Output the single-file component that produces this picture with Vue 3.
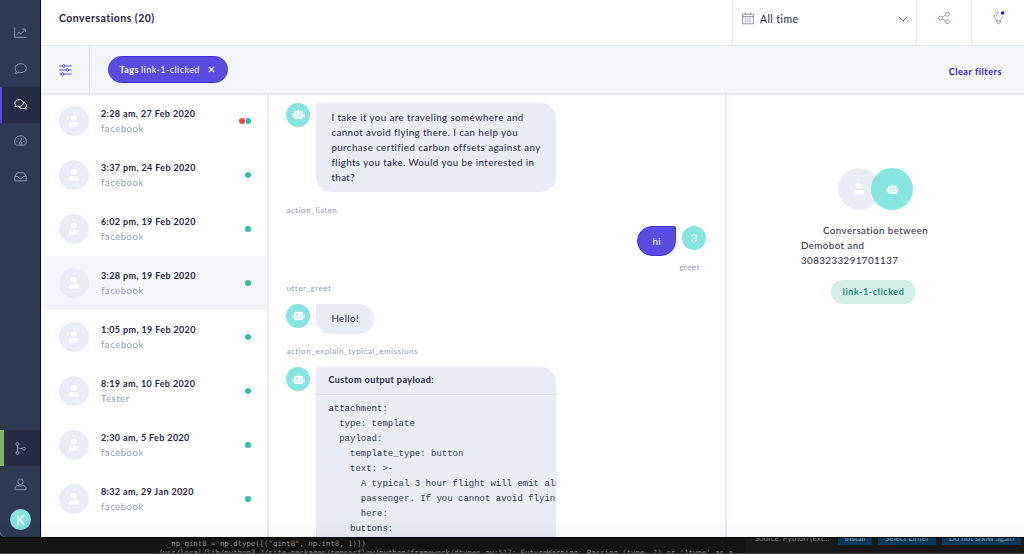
<template>
    <div class="screen">
        <div class="window">
            <nav class="sidebar">
                <div class="nav-top">
                    <div v-for="item in topNav" :key="item.name" class="nav-item" :class="{ active: item.name === 'conversations' }">
                        <svg viewBox="0 0 14 14" class="nav-icon"><path v-for="d in item.paths" :key="d" :d="d" /></svg>
                    </div>
                </div>
                <div class="nav-bottom">
                    <div v-for="item in bottomNav" :key="item.name" class="nav-item" :class="{ branch: item.name === 'branch' }">
                        <svg viewBox="0 0 14 14" class="nav-icon"><path v-for="d in item.paths" :key="d" :d="d" /></svg>
                    </div>
                    <div class="account">K</div>
                </div>
            </nav>

            <main class="main">
                <header class="header">
                    <h1>Conversations (20)</h1>
                    <div class="date-picker">
                        <svg viewBox="0 0 12 13" class="calendar">
                            <path d="M.6 2.2h10.8v9.6H.6zM.6 4.6h10.8M3.2.4v2.2M8.8.4v2.2" />
                            <path class="dots" d="M3 6.8h6.4M3 9.1h6.4" />
                        </svg>
                        <span>All time</span>
                        <svg viewBox="0 0 10 6" class="chevron"><path d="M.9.9 5 4.9 9.1.9" /></svg>
                    </div>
                    <button class="header-btn share">
                        <svg viewBox="0 0 12 12"><circle cx="2.5" cy="6" r="1.9" /><circle cx="9.3" cy="2.3" r="1.9" /><circle cx="9.3" cy="9.7" r="1.9" /><path d="M4.2 5.1 7.6 3.2M4.2 6.9 7.6 8.8" /></svg>
                    </button>
                    <button class="header-btn bulb">
                        <svg viewBox="0 0 12 14">
                            <path d="M6 1.6C3.4 1.3 1.5 3 1.5 5.2c0 2 1.7 2.6 2.3 4.8h3.4C7.7 8 9.4 7.3 9.6 5.4M3.9 10v1.6l1 1.2h1.2l1-1.2V10M3.4 5.3c0-1.1.8-1.8 1.9-1.9" />
                            <circle class="alert" cx="9.7" cy="2" r="1.8" />
                        </svg>
                    </button>
                </header>

                <div class="filters">
                    <div class="filter-toggle">
                        <svg viewBox="0 0 13 12"><path d="M.3 2h3.1M6.2 2h6.5M.3 6h6.8M9.9 6h2.8M.3 10h1.8M4.9 10h7.8" /><circle cx="4.8" cy="2" r="1.3" /><circle cx="8.5" cy="6" r="1.3" /><circle cx="3.5" cy="10" r="1.3" /></svg>
                    </div>
                    <div class="tag-filter">
                        <b>Tags</b><span>link-1-clicked</span>
                        <svg viewBox="0 0 7 7"><path d="M.8.8l5.4 5.4M6.2.8L.8 6.2" /></svg>
                    </div>
                    <a class="clear">Clear filters</a>
                </div>

                <div class="columns">
                    <div class="list">
                        <div v-for="(c, i) in conversations" :key="c.date" class="row" :class="{ selected: i === selected }" @click="selected = i">
                            <div class="avatar user">
                                <svg viewBox="0 0 12 14"><circle cx="6" cy="3.8" r="2.9" /><path d="M.8 12.6v-1.5C.8 9 2.3 7.9 4 7.7c1.2.7 2.8.7 4 0 1.7.2 3.2 1.3 3.2 3.4v1.5z" /></svg>
                            </div>
                            <div class="row-text">
                                <strong>{{ c.date }}</strong>
                                <span>{{ c.channel }}</span>
                            </div>
                            <div class="status">
                                <i v-if="c.error" class="dot red"></i>
                                <i class="dot green"></i>
                            </div>
                        </div>
                    </div>

                    <div class="chat">
                        <template v-for="(m, i) in messages" :key="i">
                            <div class="message" :class="m.from">
                                <div v-if="m.from === 'bot'" class="avatar bot">
                                    <svg viewBox="0 0 14 12"><path :d="robot" /></svg>
                                </div>
                                <div class="bubble">{{ m.text }}</div>
                                <div v-if="m.from === 'me'" class="avatar bot">3</div>
                            </div>
                            <div class="label" :class="m.from">{{ m.label }}</div>
                            <div v-if="m.next" class="label next">{{ m.next }}</div>
                        </template>
                        <div class="message bot">
                            <div class="avatar bot">
                                <svg viewBox="0 0 14 12"><path :d="robot" /></svg>
                            </div>
                            <div class="payload">
                                <div class="payload-title">Custom output payload:</div>
                                <pre>{{ payload }}</pre>
                            </div>
                        </div>
                    </div>

                    <aside class="details">
                        <div class="pair">
                            <div class="avatar user">
                                <svg viewBox="0 0 12 14"><circle cx="6" cy="3.8" r="2.9" /><path d="M.8 12.6v-1.5C.8 9 2.3 7.9 4 7.7c1.2.7 2.8.7 4 0 1.7.2 3.2 1.3 3.2 3.4v1.5z" /></svg>
                            </div>
                            <div class="avatar bot">
                                <svg viewBox="0 0 14 12"><path :d="robot" /></svg>
                            </div>
                        </div>
                        <p>Conversation between<br>Demobot and<br>3083233291701137</p>
                        <div class="tag">link-1-clicked</div>
                    </aside>
                </div>
            </main>
        </div>

        <div class="terminal">
            <pre class="output">{{ output }}</pre>
            <div class="toast">
                <span class="source">Source: Python (Ext...</span>
                <span class="action install">Install</span>
                <span class="action linter">Select Linter</span>
                <span class="action again">Do not show again</span>
            </div>
        </div>
    </div>
</template>

<script setup>
import { ref } from 'vue';

const selected = ref(3);

const topNav = [
    { name: 'chart', paths: ['M.7 1.8v10.4h12.8', 'M3.3 9.4 5.2 6.8l2.1 2 4.2-4.5', 'M8.8 3.3h3.4v3.4'] },
    { name: 'chat', paths: ['M7.2 1.8C3.8 1.8 1.2 3.9 1.2 6.7c0 1.3.5 2.3 1.3 3.2-.2 1-.8 1.7-1.5 2.3 1.4 0 2.6-.4 3.5-1.1.8.3 1.7.4 2.7.4 3.4 0 6.1-2.1 6.1-4.8S10.6 1.8 7.2 1.8z'] },
    { name: 'conversations', paths: ['M5.5 1.8C2.9 1.8.9 3.3.9 5.4c0 .9.4 1.7.9 2.3-.1.7-.5 1.2-1 1.7 1.1 0 1.9-.3 2.6-.8.7.3 1.4.4 2.1.4 2.6 0 4.6-1.6 4.6-3.6S8.1 1.8 5.5 1.8z', 'M10.3 4.9c1.9.4 3.1 1.7 3.1 3.2 0 .8-.3 1.5-.9 2.1.1.7.5 1.2 1 1.7-1 0-1.9-.3-2.6-.8-2.2.7-4.8 0-5.6-1.9'] },
    { name: 'gauge', paths: ['M2.5 12C1.3 10.9.7 9.5.7 8 .7 4.6 3.5 1.9 7 1.9s6.3 2.7 6.3 6.1c0 1.5-.6 2.9-1.8 4z', 'M8.1 4.1 7.2 8.5M5.8 9.7a1.3 1.3 0 1 0 2.6 0 1.3 1.3 0 1 0-2.6 0', 'M2.7 8h1.2M10.2 8h1.2M3.9 5h1.1M9.8 5.3h.8'] },
    { name: 'inbox', paths: ['M.8 7 3.3 3h7.4l2.5 4v4.7H.8z', 'M.8 7h3.5l1.2 1.9h3L9.7 7h3.5'] },
];

const bottomNav = [
    { name: 'branch', paths: ['M2.1 2.2a1.6 1.6 0 1 0 3.2 0 1.6 1.6 0 1 0-3.2 0', 'M2.1 11.8a1.6 1.6 0 1 0 3.2 0 1.6 1.6 0 1 0-3.2 0', 'M9 7.2a1.6 1.6 0 1 0 3.2 0 1.6 1.6 0 1 0-3.2 0', 'M3.7 3.8v6.4M3.7 4.7c.3 1.7 2 2.5 5.3 2.5'] },
    { name: 'profile', paths: ['M4.1 4a2.9 2.9 0 1 0 5.8 0 2.9 2.9 0 1 0-5.8 0', 'M4.5 8.2C2.6 8.2 1.2 9.4 1.2 11v1.6h11.6V11c0-1.6-1.4-2.8-3.3-2.8-1.5.6-3.5.6-5 0z'] },
];

const robot = 'M6.5 0h1v2h2.7c.9 0 1.5.6 1.5 1.5v6c0 .9-.6 1.5-1.5 1.5H3.8c-.9 0-1.5-.6-1.5-1.5v-6C2.3 2.6 2.9 2 3.8 2h2.7zM.7 5h1v4h-1C.3 9 0 8.7 0 8.3V5.7C0 5.3.3 5 .7 5zM12.3 5h1c.4 0 .7.3.7.7v2.6c0 .4-.3.7-.7.7h-1zM4.2 4.7v1.6h1.6V4.7zM8.2 4.7v1.6h1.6V4.7zM4 8v.9h1.4V8zM6.3 8v.9h1.4V8zM8.6 8v.9H10V8z';

const conversations = [
    { date: '2:28 am, 27 Feb 2020', channel: 'facebook', error: true },
    { date: '3:37 pm, 24 Feb 2020', channel: 'facebook' },
    { date: '6:02 pm, 19 Feb 2020', channel: 'facebook' },
    { date: '3:28 pm, 19 Feb 2020', channel: 'facebook' },
    { date: '1:05 pm, 19 Feb 2020', channel: 'facebook' },
    { date: '8:19 am, 10 Feb 2020', channel: 'Tester' },
    { date: '2:30 am, 5 Feb 2020', channel: 'facebook' },
    { date: '8:32 am, 29 Jan 2020', channel: 'facebook' },
];

const messages = [
    {
        from: 'bot',
        text: 'I take it you are traveling somewhere and\ncannot avoid flying there. I can help you\npurchase certified carbon offsets against any\nflights you take. Would you be interested in\nthat?',
        label: 'action_listen',
    },
    { from: 'me', text: 'hi', label: 'greet', next: 'utter_greet' },
    { from: 'bot', text: 'Hello!', label: 'action_explain_typical_emissions' },
];

const payload = `attachment:
  type: template
  payload:
    template_type: button
    text: >-
      A typical 3 hour flight will emit almost
      passenger. If you cannot avoid flying,
      here:
    buttons:`;

const output = `  _np_qint8 = np.dtype([("qint8", np.int8, 1)])
/usr/local/lib/python3.7/site-packages/tensorflow/python/framework/dtypes.py:517: FutureWarning: Passing (type, 1) or '1type' as a`;
</script>

<style>
body {
    background: #111;
}
</style>

<style scoped>
.screen {
    width: 1024px;
    height: 554px;
    overflow: hidden;
    background: #111;
    font-family: Lato, "Liberation Sans", sans-serif;
    color: #1f2440;
}

svg {
    fill: none;
    stroke: currentColor;
    display: block;
}

.window {
    position: relative;
    display: flex;
    height: 537px;
    border-bottom-left-radius: 5px;
    overflow: hidden;
    background: #fff;

    /* shade along the lower edge */
    &::after {
        content: '';
        position: absolute;
        inset: auto 0 0 0;
        height: 20px;
        background: linear-gradient(transparent, rgba(0, 0, 0, .04));
    }
}

.sidebar {
    box-sizing: border-box;
    width: 41px;
    flex: none;
    display: flex;
    flex-direction: column;
    justify-content: space-between;
    padding-top: 15px;
    background: #2e3a54;
    border-right: 1px solid #080b2d;
}

.nav-item {
    box-sizing: border-box;
    height: 36px;
    display: flex;
    align-items: center;
    justify-content: center;
    color: #969fb8;
}

.nav-item.active {
    background: #232c42;
    color: #fff;
    border-left: 2px solid #5a4be3;
    padding-right: 2px;
}

.nav-item.branch {
    background: #232c42;
    border-left: 4px solid #84b262;
    padding-right: 4px;
}

.nav-icon {
    width: 13px;
    height: 13px;
    stroke-width: 1;
}

.nav-top .nav-icon {
    margin-bottom: 1px;
}

.account {
    width: 21px;
    height: 21px;
    margin: 7px auto 7px 10px;
    border-radius: 50%;
    background: #85e5e0;
    color: #fff;
    font-size: 13px;
    line-height: 22px;
    text-align: center;
}

.main {
    flex: 1;
    min-width: 0;
    display: flex;
    flex-direction: column;
}

.header {
    height: 45px;
    display: flex;
    border-bottom: 1px solid #e4e6f0;
}

h1 {
    flex: 1;
    margin: 0;
    padding-left: 18px;
    font-size: 10.5px;
    line-height: 37px;
    letter-spacing: .48px;
}

.date-picker {
    box-sizing: border-box;
    width: 184px;
    display: flex;
    align-items: center;
    padding: 0 8px 8px 9px;
    border-left: 1px solid #e4e6f0;
    font-size: 10.5px;
    letter-spacing: .4px;
}

.date-picker span {
    flex: 1;
    padding-left: 6px;
}

.calendar {
    width: 12px;
    height: 13px;
    stroke: #8087a3;
    stroke-width: .9;
}

.dots {
    stroke-width: 1.2;
    stroke-dasharray: 1.2 1;
}

.chevron {
    width: 10px;
    height: 6px;
    stroke: #565d7a;
}

.header-btn {
    box-sizing: border-box;
    display: flex;
    justify-content: center;
    align-items: center;
    width: 55px;
    padding: 0 0 9px;
    border: 0;
    border-left: 1px solid #e4e6f0;
    background: none;
    color: #929ab4;
}

.header-btn svg {
    width: 12px;
    height: 12px;
    stroke-width: 1;
}

.header-btn.bulb {
    width: 53px;
}

.bulb svg {
    height: 14px;
    margin-left: 1px;
}

.alert {
    fill: #2c12d4;
    stroke: none;
}

.filters {
    height: 47px;
    display: flex;
    align-items: center;
    background: #f5f6fb;
    border-bottom: 2px solid #e9ebf4;
}

.filter-toggle {
    width: 48px;
    height: 100%;
    display: flex;
    align-items: center;
    justify-content: center;
    border-right: 1px solid #e2e4ee;
    color: #5a4be3;
}

.filter-toggle svg {
    width: 13px;
    height: 12px;
    stroke-width: 1;
}

.tag-filter {
    box-sizing: border-box;
    display: flex;
    align-items: center;
    width: 120px;
    height: 27px;
    margin-left: 17.5px;
    padding: 0 12px 0 11px;
    border-radius: 14px;
    border: 1px solid #4530dc;
    background: #5a4be3;
    color: #fff;
    font-size: 9px;
    letter-spacing: .45px;
}

.tag-filter b {
    margin-right: 2px;
}

.tag-filter svg {
    width: 7px;
    height: 7px;
    margin-left: auto;
    stroke-width: 1.2;
}

.clear {
    margin: 3px 22px 0 auto;
    color: #2c12d4;
    font-size: 9px;
    font-weight: bold;
    letter-spacing: .56px;
}

.columns {
    flex: 1;
    min-height: 0;
    display: flex;
}

.list {
    width: 226px;
    border-right: 2px solid #eaedf6;
}

.row {
    box-sizing: border-box;
    height: 54px;
    display: flex;
    align-items: center;
    padding: 0 16px 1px 18px;
}

.row:first-child {
    height: 53px;
}

.row.selected {
    background: #f5f6fb;
}

.avatar {
    flex: none;
    display: flex;
    align-items: center;
    justify-content: center;
    border-radius: 50%;
    color: #fff;
}

.avatar svg {
    fill: #fff;
    stroke: none;
}

.avatar.user {
    width: 30px;
    height: 30px;
    background: #eaedf6;
}

.avatar.user svg {
    width: 12px;
    height: 14px;
}

.avatar.bot {
    width: 24px;
    height: 24px;
    background: #85e5e0;
    font-size: 12px;
}

.avatar.bot svg {
    width: 13px;
    height: 11px;
    fill-rule: evenodd;
}

.row-text {
    flex: 1;
    padding-left: 12px;
    font-size: 9px;
    line-height: 15px;
    letter-spacing: .37px;
}

.row-text strong,
.row-text span {
    display: block;
}

.row-text span {
    padding-top: 1px;
    color: #979eb8;
    font-size: 9.5px;
    line-height: 14px;
    letter-spacing: .56px;
}

.status {
    display: flex;
}

.dot {
    width: 6px;
    height: 6px;
    border-radius: 50%;
    background: #30bfa2;
}

.dot.red {
    position: relative;
    background: #ff4040;
    box-shadow: 0 0 0 1px #fff;
    z-index: 1;
}

.chat {
    box-sizing: border-box;
    width: 458px;
    padding: 7.6px 19px 0 17.4px;
    overflow: hidden;
    border-right: 2px solid #eaedf6;
}

.message {
    display: flex;
    gap: 6px;
}

.bubble {
    box-sizing: border-box;
    max-width: 240px;
    padding: 7.4px 15px 7.2px;
    border-radius: 2px 15px 15px 15px;
    background: #eaedf6;
    font-size: 9.75px;
    line-height: 15px;
    letter-spacing: .41px;
    white-space: pre;
}

.message.me {
    justify-content: flex-end;
}

.me .bubble {
    border-radius: 15px 2px 15px 15px;
    background: #5a4be3;
    border: 1px solid #4530dc;
    color: #fff;
    padding: 6.8px 14px 6px;
}

.label {
    height: 12px;
    margin: 11.4px 0 10.4px;
    color: #979eb8;
    font-size: 8.25px;
    line-height: 12px;
    letter-spacing: .42px;
}

.label.me {
    margin: 5px 6px 9px 0;
    text-align: right;
}

.label.next {
    margin: 9px 0 10.2px;
}

.payload {
    width: 239.6px;
    height: 200px;
    overflow: hidden;
    border-top-left-radius: 2px;
    border-top-right-radius: 15px;
    background: #eaedf6;
}

.payload-title {
    padding-left: 12px;
    border-bottom: 1px solid #dcdfec;
    font-size: 9px;
    font-weight: bold;
    line-height: 26.5px;
    letter-spacing: .43px;
}

pre {
    margin: 0;
    font-family: "Liberation Mono", monospace;
}

.payload pre {
    padding: 7px 0 0 12px;
    color: #343955;
    font-size: 9px;
    line-height: 15px;
}

.details {
    flex: 1;
    display: flex;
    flex-direction: column;
    align-items: center;
    padding-top: 73px;
    padding-right: 4px;
}

.pair {
    display: flex;
    margin-left: 4px;
}

.pair .avatar {
    width: 42px;
    height: 42px;
}

.pair .bot {
    margin-left: -9px;
}

p {
    width: 145px;
    margin: 13px 0 12px;
    font-size: 9.75px;
    line-height: 15px;
    letter-spacing: .43px;
    text-indent: 22px;
    white-space: nowrap;
}

.tag {
    height: 24px;
    padding: 0 12px;
    border-radius: 12px;
    background: #d2f0e9;
    color: #208a72;
    font-size: 9px;
    font-weight: bold;
    line-height: 24px;
    letter-spacing: .57px;
}

.terminal {
    box-sizing: border-box;
    display: flex;
    justify-content: space-between;
    height: 17px;
    overflow: hidden;
    border-top: 1px solid #050505;
    border-bottom: 1px solid #514650;
    background: #131313;
}

.output {
    width: 587px;
    margin-left: 158px;
    overflow: hidden;
    color: #8c8c8c;
    font-family: "DejaVu Sans Mono", monospace;
    font-size: 7.35px;
    line-height: 9px;
    padding-top: 1px;
}

.toast {
    flex: none;
    display: flex;
    width: 278px;
    height: 15px;
    background: #191919;
    font-size: 8px;
    color: #888;
}

.toast span {
    height: 7px;
    overflow: hidden;
    line-height: 0;
    text-align: center;
    white-space: nowrap;
}

.toast .source {
    width: 92px;
}

.toast .action {
    background: #08395c;
    color: #8699a8;
}

.install {
    width: 34px;
}

.linter {
    width: 58px;
    margin-left: 6px;
}

.again {
    width: 79px;
    margin-left: 6px;
}
</style>
